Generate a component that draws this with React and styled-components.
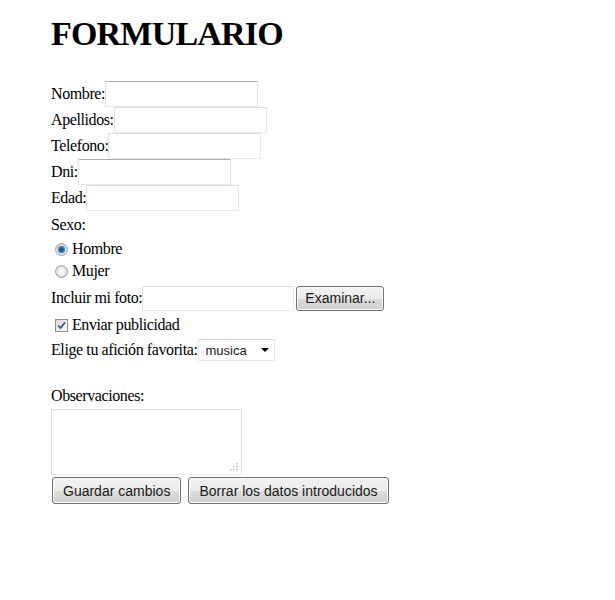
import React from "react";
import styled, { createGlobalStyle } from "styled-components";

const Global = createGlobalStyle`
  html, body { margin: 0; padding: 0; background: #fff; }
  body { font-family: "Liberation Serif", "Times New Roman", serif; font-size: 16px; color: #000; }
`;

const Page = styled.div`
  padding: 14px 0 0 51px;
  width: 615px;
  height: 600px;
  box-sizing: border-box;
`;

const Title = styled.h1`
  margin: 0;
  font-family: "Liberation Serif", "Times New Roman", serif;
  font-size: 34px;
  line-height: 40px;
  font-weight: bold;
  letter-spacing: -0.8px;
`;

const Form = styled.form`
  display: flex;
  flex-direction: column;
  margin-top: 27px;
`;

const Row = styled.div`
  display: flex;
  align-items: center;
  height: ${(p) => p.$h || 26}px;
  margin-top: ${(p) => p.$mt || 0}px;
  padding-left: ${(p) => p.$indent || 0}px;
  white-space: nowrap;
`;

const Label = styled.span`
  font-size: 16px;
  line-height: 18px;
  letter-spacing: -0.4px;
`;

const TextInput = styled.span`
  display: inline-block;
  box-sizing: border-box;
  width: ${(p) => p.$w || 153}px;
  height: ${(p) => p.$hh || 26}px;
  background: #fff;
  border: 1px solid #e3e9ef;
  border-left-color: #e2e3ea;
  border-top-color: ${(p) => (p.$focus ? "#abadb3" : "#dcdee4")};
`;

const RadioDot = styled.span`
  display: inline-block;
  box-sizing: border-box;
  width: 13px;
  height: 13px;
  border-radius: 50%;
  border: 1px solid #a0a0a0;
  background: ${(p) =>
    p.$checked
      ? "radial-gradient(circle, #1d5a8c 0 2px, #4a8fc4 2.5px 3.5px, #dcdcdc 4px)"
      : "radial-gradient(circle, #f4f4f4 0 3px, #d8d8d8 5.5px)"};
  margin-right: 4px;
`;

const CheckBox = styled.span`
  display: inline-flex;
  align-items: center;
  justify-content: center;
  box-sizing: border-box;
  width: 13px;
  height: 13px;
  border: 1px solid #8e8f8f;
  background: linear-gradient(135deg, #dcdcdc, #fafafa);
  margin-right: 4px;
`;

const FileBox = styled(TextInput)`
  width: 152px;
  height: 25px;
  margin-right: 2px;
`;

const Button = styled.span`
  display: inline-flex;
  align-items: center;
  justify-content: center;
  box-sizing: border-box;
  height: ${(p) => p.$h || 27}px;
  padding: 0 10px;
  margin-right: ${(p) => p.$mr || 0}px;
  border: 1px solid #707070;
  border-radius: 3px;
  background: linear-gradient(#f2f2f2 0%, #ebebeb 50%, #dddddd 51%, #cfcfcf 100%);
  box-shadow: inset 0 0 0 1px #fbfbfb;
  font-family: "Liberation Sans", Arial, sans-serif;
  font-size: 14px;
  color: #1a1a1a;
`;

const FileButton = styled(Button)`
  width: 88px;
  padding: 0;
`;

const Select = styled.span`
  display: inline-flex;
  align-items: center;
  justify-content: space-between;
  box-sizing: border-box;
  width: 77px;
  height: 22px;
  margin-left: 1px;
  padding: 0 5px 0 6px;
  border: 1px solid #e3e9ef;
  border-top-color: #d6d9df;
  font-family: "Liberation Sans", Arial, sans-serif;
  font-size: 13px;
  color: #222;
`;

const Arrow = styled.span`
  width: 0;
  height: 0;
  border-left: 4px solid transparent;
  border-right: 4px solid transparent;
  border-top: 4px solid #000;
`;

const TextArea = styled.span`
  position: relative;
  display: block;
  box-sizing: border-box;
  width: 191px;
  height: 66px;
  margin-top: 3px;
  border: 1px solid #dcdfe6;
  border-bottom-color: #e8ebf0;
`;

const Grip = styled.svg`
  position: absolute;
  right: 3px;
  bottom: 3px;
`;

const Buttons = styled.div`
  display: flex;
  margin-top: 2px;
  padding-left: 1px;
`;

export default function App() {
  return (
    <Page>
      <Global />
      <Title>FORMULARIO</Title>
      <Form>
        <Row><Label>Nombre:</Label><TextInput $focus /></Row>
        <Row><Label>Apellidos:</Label><TextInput /></Row>
        <Row><Label>Telefono:</Label><TextInput /></Row>
        <Row><Label>Dni:</Label><TextInput $focus /></Row>
        <Row><Label>Edad:</Label><TextInput /></Row>
        <Row $h={27}><Label>Sexo:</Label></Row>
        <Row $h={22} $indent={4}><RadioDot $checked /><Label>Hombre</Label></Row>
        <Row $h={22} $indent={4}><RadioDot /><Label>Mujer</Label></Row>
        <Row $h={32}>
          <Label>Incluir mi foto:</Label>
          <FileBox />
          <FileButton $h={25}>Examinar...</FileButton>
        </Row>
        <Row $h={22} $indent={4}>
          <CheckBox>
            <svg width="9" height="9" viewBox="0 0 9 9">
              <path d="M1 4.5 L3.5 7 L8 1.5" fill="none" stroke="#2c4f8e" strokeWidth="1.6" />
            </svg>
          </CheckBox>
          <Label>Enviar publicidad</Label>
        </Row>
        <Row $h={28}>
          <Label>Elige tu afición favorita:</Label>
          <Select>musica<Arrow /></Select>
        </Row>
        <Row $h={20} $mt={22}><Label>Observaciones:</Label></Row>
        <TextArea>
          <Grip width="8" height="8" viewBox="0 0 8 8">
            <rect x="6" y="0" width="1.5" height="1.5" fill="#bbb" />
            <rect x="3" y="3" width="1.5" height="1.5" fill="#bbb" />
            <rect x="6" y="3" width="1.5" height="1.5" fill="#bbb" />
            <rect x="0" y="6" width="1.5" height="1.5" fill="#bbb" />
            <rect x="3" y="6" width="1.5" height="1.5" fill="#bbb" />
            <rect x="6" y="6" width="1.5" height="1.5" fill="#bbb" />
          </Grip>
        </TextArea>
        <Buttons>
          <Button $mr={7}>Guardar cambios</Button>
          <Button>Borrar los datos introducidos</Button>
        </Buttons>
      </Form>
    </Page>
  );
}
